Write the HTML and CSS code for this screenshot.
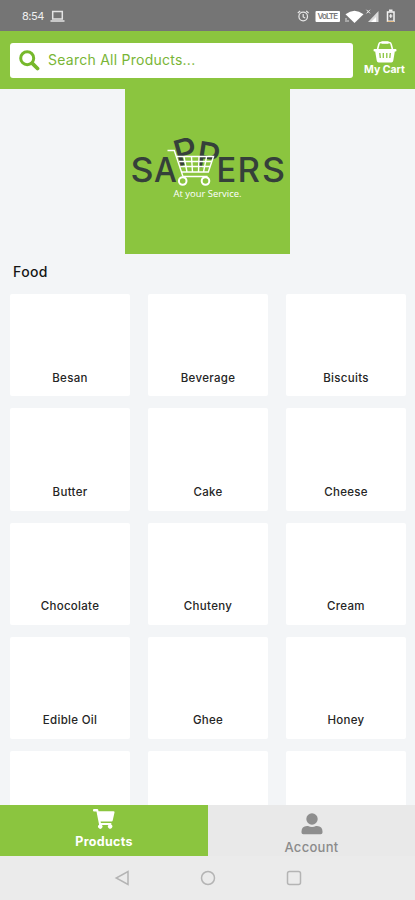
FILE: index.html
```html
<!DOCTYPE html>
<html lang="en">
<head>
    <meta charset="UTF-8">
    <meta name="viewport" content="width=device-width, initial-scale=1.0">
    <title>Sappers</title>
    <link rel="stylesheet" href="styles.css">
</head>
<body>
    <div class="status-bar">
        <span class="time">8:54</span>
        <svg class="laptop" width="15" height="13" viewBox="0 0 15 13"><path d="M2.7 1.5h9.6v7.5H2.7zM.5 11h14" fill="none" stroke="#e4e4e4" stroke-width="1.5"/></svg>
        <svg class="status-icons" width="102" height="16" viewBox="0 0 102 16">
            <g fill="none" stroke="#e8e8e8" stroke-width="1.2">
                <circle cx="6.2" cy="8.5" r="4.3"/>
                <path d="M6.2 6v3l2 1M.8 5l2.4-2M11.6 5L9.2 3"/>
            </g>
            <rect x="18.5" y="3" width="24.5" height="11" rx="1" fill="#fff"/>
            <text class="volte" x="20.5" y="11.4" textLength="20.5">VoLTE</text>
            <path d="M48.5 6.2Q57.5-.8 66.5 6.2L57.5 15z" fill="#fff"/>
            <path d="M49 10v4M51 12v2" stroke="#ddd"/>
            <path d="M71 14L81.5 3v11z" fill="#d9d9d9"/>
            <path d="M74 14l5-5v5z" fill="#fff"/>
            <path d="M69.5 1.8l3.5 3.6M73 1.8l-3.5 3.6" stroke="#eee"/>
            <path d="M90.5 4h6.5v9.3h-6.5z" fill="none" stroke="#f2f2f2" stroke-width="1.5"/>
            <path d="M92 2.5h3.5" stroke="#f2f2f2" stroke-width="2"/>
            <path d="M93.8 6v4M92.2 8h3.2" stroke="#fff"/>
            <path d="M90.5 13.5H97" stroke="#e8bd84"/>
        </svg>
    </div>

    <header class="header">
        <div class="search">
            <svg width="21" height="21" viewBox="0 0 21 21"><circle cx="8.2" cy="8.2" r="6.5" fill="none" stroke="#76b82b" stroke-width="3"/><path d="M13.3 13.3l5.2 5.2" stroke="#76b82b" stroke-width="3.8" stroke-linecap="round"/></svg>
            <span>Search All Products...</span>
        </div>
        <div class="my-cart">
            <svg width="24" height="22" viewBox="0 0 24 22">
                <path d="M4.5 8.5L6 2.8Q6.3 1.5 8 1.5h8q1.7 0 2 1.3l1.5 5.7" fill="none" stroke="#fff" stroke-width="1.6"/>
                <path d="M8.5.3h7v2.4h-7zM1.5 8h21q1 0 1 1.2t-1 1.3h-.7l-1.5 9q-.3 2-2 2H5.7q-1.7 0-2-2l-1.5-9h-.7q-1 0-1-1.3T1.5 8z" fill="#fff"/>
                <path d="M6.8 12l.5 5M10.3 12v5M13.8 12v5M17.3 12l-.5 5" stroke="#8bc53f" stroke-width="1.3"/>
            </svg>
            <span>My Cart</span>
        </div>
    </header>

    <main class="content">
        <div class="banner">
            <svg width="165" height="165" viewBox="0 0 165 165">
                <g class="logo-text">
                    <text transform="translate(5.5 93) scale(1.05 1)">S</text>
                    <text transform="translate(29 93) scale(.95 1)">A</text>
                    <text transform="translate(91.5 93) scale(.96 1)">E</text>
                    <text transform="translate(112.5 93) scale(1.02 1)">R</text>
                    <text transform="translate(137 93) scale(1.05 1)">S</text>
                    <text class="fallen" transform="translate(53 78) rotate(-16)">P</text>
                    <text class="fallen" transform="translate(70 77.5) rotate(9)">P</text>
                </g>
                <g fill="none" stroke="#fff" stroke-width="1.4">
                    <path d="M42.5 61.5h6.8l8.5 25.5M52 67.5h36.5l-5.2 15.5H57M54 72.5h32.5M55.5 77.5H85M59 68l3 15M66.5 68l1 15M74 68l-.5 15M81.5 68l-3 15M57.5 87.5h25"/>
                    <circle cx="57.7" cy="92" r="3.8" stroke-width="2" fill="#8bc53f"/>
                    <circle cx="80.5" cy="92" r="3.8" stroke-width="2" fill="#8bc53f"/>
                </g>
                <text class="slogan" x="48.5" y="108.3" textLength="68" lengthAdjust="spacingAndGlyphs">At your Service.</text>
            </svg>
        </div>

        <h2>Food</h2>
        <div class="grid">
            <div class="card">Besan</div>
            <div class="card">Beverage</div>
            <div class="card">Biscuits</div>
            <div class="card">Butter</div>
            <div class="card">Cake</div>
            <div class="card">Cheese</div>
            <div class="card">Chocolate</div>
            <div class="card">Chuteny</div>
            <div class="card">Cream</div>
            <div class="card">Edible Oil</div>
            <div class="card">Ghee</div>
            <div class="card">Honey</div>
            <div class="card"></div>
            <div class="card"></div>
            <div class="card"></div>
        </div>
    </main>

    <nav class="tabs">
        <div class="tab active">
            <svg width="22" height="20" viewBox="0 0 22 20"><path d="M0 1q0-1 1-1h3.2q.8 0 1 .8l.3 1.5h15q1.2 0 1 1.1l-1.8 8q-.2 1-1.1 1H7.6l.3 1.5h9.8q.9 0 .7 1l-.2.7a2.2 2.2 0 1 1-2.7.4H8.8a2.2 2.2 0 1 1-2.7-.3L3.5 2.4H1q-1 0-1-1z" fill="#fff"/></svg>
            <span>Products</span>
        </div>
        <div class="tab">
            <svg width="22" height="22" viewBox="0 0 22 22"><circle cx="11" cy="6" r="5.7" fill="#8e8e8e"/><path d="M6 13h1q4 1.8 8 0h1q5.5.3 5.5 5.5v1q0 1.8-1.8 1.8H2.3q-1.8 0-1.8-1.8v-1Q.5 13.3 6 13z" fill="#8e8e8e"/></svg>
            <span>Account</span>
        </div>
    </nav>

    <div class="system-nav">
        <svg width="16" height="16" viewBox="0 0 16 16"><path d="M14 1.5v13L2.2 8z"/></svg>
        <svg width="16" height="16" viewBox="0 0 16 16"><circle cx="8" cy="8" r="6.5"/></svg>
        <svg width="16" height="16" viewBox="0 0 16 16"><rect x="1.5" y="1.5" width="13" height="13" rx="2"/></svg>
    </div>
</body>
</html>
```
FILE: styles.css
```css
* {
    box-sizing: border-box;
}
body {
    margin: 0;
    height: 900px;
    display: flex;
    flex-direction: column;
    overflow: hidden;
    font-family: Inter, "Open Sans", sans-serif;
    background: #f3f5f7;
}
svg {
    display: block;
    flex-shrink: 0;
}
.status-bar {
    height: 31px;
    flex-shrink: 0;
    display: flex;
    align-items: center;
    padding: 1px 16px 0 22px;
    background: #757575;
    color: #f0f0f0;
}
.time {
    width: 28px;
    font-size: 11px;
    letter-spacing: -0.5px;
}
.status-icons {
    margin-left: auto;
}
.volte {
    font-size: 8px;
    font-weight: 600;
    fill: #777;
}
.header {
    height: 58px;
    flex-shrink: 0;
    display: flex;
    align-items: flex-start;
    padding: 12px 8px 0 10px;
    background: #8bc53f;
}
.search {
    width: 343px;
    height: 35px;
    display: flex;
    align-items: center;
    gap: 8px;
    padding-left: 9px;
    background: #fff;
    border-radius: 3px;
    color: #79b536;
    font-size: 14px;
}
.search span {
    letter-spacing: 0.25px;
    padding-bottom: 3px;
}
.my-cart {
    flex: 1;
    display: flex;
    flex-direction: column;
    align-items: center;
    margin: -2px 0 0 9px;
    color: #fff;
    font-size: 10.5px;
    line-height: 13px;
    font-weight: 700;
    white-space: nowrap;
}
.content {
    flex: 1;
    min-height: 0;
    overflow: hidden;
}
.banner {
    width: 165px;
    height: 165px;
    margin: 0 auto;
    background: #8bc53f;
}
.logo-text {
    font-size: 34px;
    font-weight: 500;
    fill: #35403a;
}
.fallen {
    font-size: 36px;
}
.slogan {
    font-family: "Open Sans", sans-serif;
    font-size: 9px;
    fill: #fff;
}
h2 {
    margin: 9px 0 13px 13px;
    font-size: 14px;
    line-height: 18px;
    font-weight: 500;
    letter-spacing: 0.4px;
    color: #151515;
}
.grid {
    display: grid;
    grid-template-columns: repeat(3, 120px);
    grid-auto-rows: 102.3px;
    gap: 12px 18px;
    padding: 0 9px 0 10px;
}
.card {
    display: flex;
    align-items: flex-end;
    justify-content: center;
    padding-bottom: 10.8px;
    background: #fff;
    border-radius: 2px;
    color: #252525;
    font-size: 11.5px;
    line-height: 16px;
    font-weight: 500;
    letter-spacing: 0.3px;
}
.tabs {
    height: 51px;
    flex-shrink: 0;
    display: flex;
    background: #e9e9e9;
}
.tab {
    width: 207px;
    display: flex;
    flex-direction: column;
    align-items: center;
    padding-top: 8px;
    color: #8b8b8b;
    font-size: 13px;
    line-height: 18px;
    font-weight: 500;
    letter-spacing: 0.3px;
}
.tab span {
    margin-top: 3px;
}
.tab.active {
    width: 208px;
    padding-top: 4px;
    background: #8bc53f;
    color: #fff;
    font-size: 12.5px;
    font-weight: 700;
}
.tab.active span {
    margin-top: 4px;
}
.system-nav {
    height: 44px;
    flex-shrink: 0;
    display: flex;
    justify-content: center;
    align-items: center;
    gap: 70px;
    background: #ebebeb;
}
.system-nav svg {
    fill: none;
    stroke: #b4b4b4;
    stroke-width: 1.5;
}
```
